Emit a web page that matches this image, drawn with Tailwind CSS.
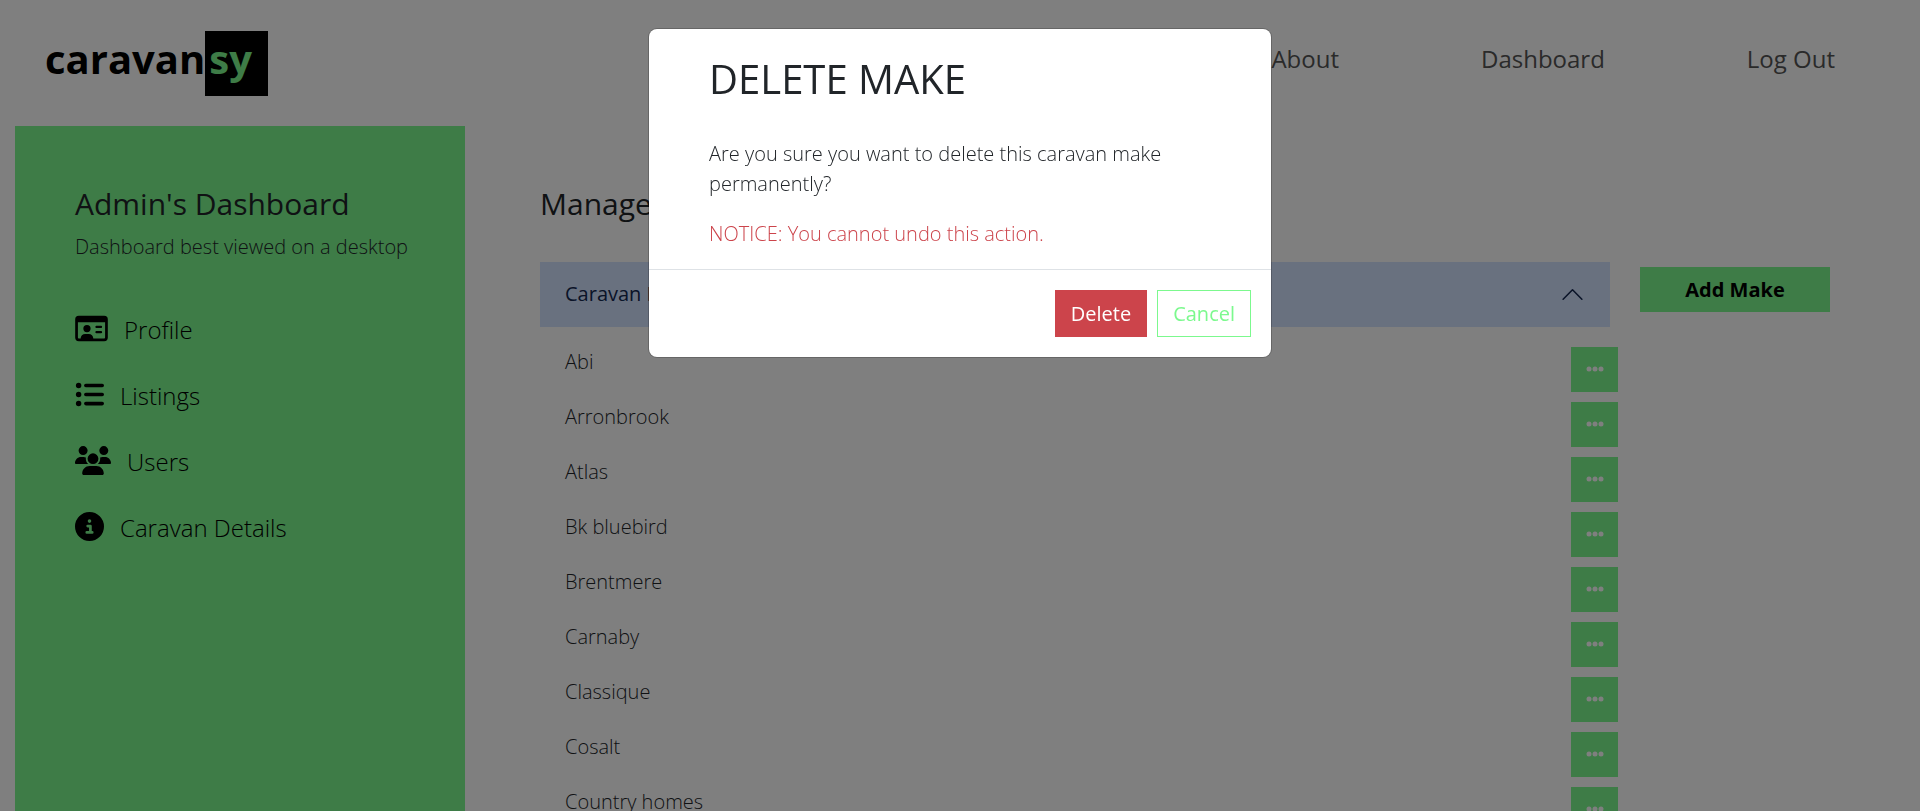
<!DOCTYPE html>
<html lang="en">
<head>
<meta charset="utf-8">
<meta name="viewport" content="width=device-width, initial-scale=1">
<title>Caravansy – Admin's Dashboard</title>
<script src="https://cdn.jsdelivr.net/npm/@tailwindcss/browser@4"></script>
</head>
<body class="h-screen overflow-hidden bg-white font-['Open_Sans',sans-serif] text-xl leading-[30px] font-light text-[#212529]">
<div class="flex h-full flex-col">
  <header class="flex shrink-0 items-start justify-between pt-[31px] pr-[85px] pb-[30px] pl-[45px]">
    <a href="#" class="flex text-[40px] leading-14 font-bold text-black">
      <span>caravan</span><span class="h-[65px] bg-black pr-4 pl-1 text-[#7cf98e]">sy</span>
    </a>
    <nav class="flex gap-[142px] pt-[10px] text-2xl leading-9 font-normal text-[#555]">
      <a href="#">About</a>
      <a href="#">Dashboard</a>
      <a href="#">Log Out</a>
    </nav>
  </header>

  <div class="flex min-h-0 flex-1 pl-[15px]">
    <aside class="w-[450px] shrink-0 bg-[#7cf98e] px-[60px] pt-[60px]">
      <h2 class="text-[30px] leading-9 font-medium">Admin's Dashboard</h2>
      <p class="mt-[10px] whitespace-nowrap">Dashboard best viewed on a desktop</p>
      <ul class="mt-[50px] flex flex-col gap-[30px] text-2xl leading-9 text-black">
        <li><a href="#" class="flex gap-4">
          <svg class="mt-0.5 h-[29px] w-[33px]" viewBox="0 0 576 512" fill="currentColor" aria-hidden="true"><path fill-rule="evenodd" d="M64 32h448a64 64 0 0 1 64 64v320a64 64 0 0 1-64 64H64a64 64 0 0 1-64-64V96a64 64 0 0 1 64-64zM48 144v272a16 16 0 0 0 16 16h32c0-44 36-80 80-80h64c44 0 80 36 80 80h192a16 16 0 0 0 16-16V144zM208 192a64 64 0 1 1 0 128 64 64 0 1 1 0-128zM376 208h80a18 18 0 0 1 0 40h-80a18 18 0 0 1 0-40zM376 300h80a18 18 0 0 1 0 40h-80a18 18 0 0 1 0-40z"/></svg>
          Profile</a></li>
        <li><a href="#" class="flex gap-4">
          <svg class="mt-0.5 size-[29px]" viewBox="0 0 512 512" fill="currentColor" aria-hidden="true"><circle cx="64" cy="96" r="48"/><circle cx="64" cy="256" r="48"/><circle cx="64" cy="416" r="48"/><rect x="160" y="64" width="352" height="64" rx="32"/><rect x="160" y="224" width="352" height="64" rx="32"/><rect x="160" y="384" width="352" height="64" rx="32"/></svg>
          Listings</a></li>
        <li><a href="#" class="flex gap-4">
          <svg class="mt-0.5 h-[29px] w-9" viewBox="0 0 640 512" fill="currentColor" aria-hidden="true"><path d="M144 0a80 80 0 1 1 0 160A80 80 0 1 1 144 0zM512 0a80 80 0 1 1 0 160A80 80 0 1 1 512 0zM0 298.700C0 239.800 47.800 192 106.700 192h42.700c15.900 0 31 3.500 44.600 9.700-1.300 7.200-1.900 14.700-1.900 22.300 0 38.200 16.800 72.500 43.300 96H21.300C9.600 320 0 310.400 0 298.700zM405.300 320h-.7c26.600-23.500 43.300-57.800 43.300-96 0-7.600-.7-15-1.900-22.300 13.600-6.300 28.700-9.700 44.600-9.700h42.700C592.200 192 640 239.800 640 298.700c0 11.800-9.600 21.300-21.300 21.300H405.300zM224 224a96 96 0 1 1 192 0 96 96 0 1 1-192 0zM128 485.300C128 411.700 187.700 352 261.300 352h117.400C452.300 352 512 411.700 512 485.300c0 14.700-11.900 26.700-26.700 26.700H154.700c-14.700 0-26.700-11.900-26.700-26.700z"/></svg>
          Users</a></li>
        <li><a href="#" class="flex gap-4">
          <svg class="mt-0.5 size-[29px]" viewBox="0 0 512 512" fill="currentColor" aria-hidden="true"><path fill-rule="evenodd" d="M256 0a256 256 0 1 1 0 512 256 256 0 1 1 0-512zM216 336h-8a24 24 0 0 0 0 48h96a24 24 0 0 0 0-48h-8v-88a24 24 0 0 0-24-24h-48a24 24 0 0 0 0 48h24v64zM256 128a32 32 0 1 0 0 64 32 32 0 1 0 0-64z"/></svg>
          Caravan Details</a></li>
      </ul>
    </aside>

    <main class="flex min-w-0 flex-1 flex-col pt-[60px] pr-[90px] pl-[75px]">
      <h2 class="text-[30px] leading-9 font-medium">Manage Caravan Makes</h2>
      <div class="mt-10 flex items-start gap-[30px]">
        <section class="min-w-0 flex-1">
          <button type="button" aria-expanded="true" class="flex h-[65px] w-full items-center justify-between bg-[#d3e2ff] px-[25px] pb-px text-left font-normal text-[#142850]">
            Caravan Makes
            <svg class="size-[25px]" viewBox="0 0 16 16" fill="none" stroke="currentColor" stroke-linecap="round" stroke-linejoin="round" aria-hidden="true"><path d="M2 11l6-6 6 6"/></svg>
          </button>
          <ul id="makes" class="-mr-2 flex flex-col gap-[10px] pt-5 pl-[25px]"></ul>
        </section>
        <button type="button" class="mt-[5px] h-[45px] w-[190px] bg-[#7cf98e] font-bold text-black">Add Make</button>
      </div>
    </main>
  </div>
</div>

<template id="make-row">
  <li class="flex h-[45px] items-start justify-between"><span></span>
    <button type="button" aria-label="Make options" class="flex h-[45px] w-[47px] items-center justify-center bg-[#7cf98e] text-white">
      <svg class="h-5 w-[18px]" viewBox="0 0 18 20" fill="currentColor" aria-hidden="true"><circle cx="3" cy="9" r="2.500"/><circle cx="9" cy="9" r="2.500"/><circle cx="15" cy="9" r="2.500"/></svg>
    </button>
  </li>
</template>

<div class="fixed inset-0 bg-black/50 px-4 pt-[29px]">
  <div role="dialog" aria-modal="true" aria-labelledby="dialog-title" class="mx-auto max-w-[622px] rounded-lg bg-white ring-1 ring-black/20">
    <div class="px-[60px] pt-[26px] pb-5">
      <h1 id="dialog-title" class="mb-9 text-[40px] leading-12 font-medium">DELETE MAKE</h1>
      <p class="mb-5">Are you sure you want to delete this caravan make permanently?</p>
      <p class="text-[#cc444b]">NOTICE: You cannot undo this action.</p>
    </div>
    <div class="flex justify-end gap-[10px] border-t border-[#dee2e6] p-5 font-medium">
      <button type="button" class="h-[47px] border border-[#cc444b] bg-[#cc444b] px-[15px] text-white">Delete</button>
      <button type="button" class="h-[47px] border border-[#7cf98e] px-[15px] text-[#7cf98e]">Cancel</button>
    </div>
  </div>
</div>

<script>
  const makes = ["Abi", "Arronbrook", "Atlas", "Bk bluebird", "Brentmere", "Carnaby", "Classique", "Cosalt", "Country homes"];
  const row = document.getElementById("make-row");
  for (const name of makes) {
    const item = row.content.cloneNode(true);
    item.querySelector("span").textContent = name;
    document.getElementById("makes").append(item);
  }
</script>
</body>
</html>
